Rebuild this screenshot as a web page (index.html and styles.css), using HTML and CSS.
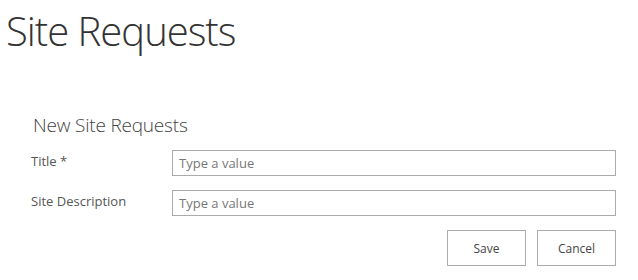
FILE: index.html
```html
<!DOCTYPE html>
<html lang="en">
<head>
  <meta charset="UTF-8" />
  <title>Site Requests</title>
  <link rel="stylesheet" href="styles.css">
</head>
<body>

  <h1 class="page-title">Site Requests</h1>

  <form class="request-form">
    <h2 class="form-title">New Site Requests</h2>

    <div class="form-row">
      <label for="siteTitle">Title *</label>
      <input id="siteTitle" type="text" placeholder="Type a value">
    </div>

    <div class="form-row">
      <label for="siteDescription">Site Description</label>
      <input id="siteDescription" type="text" placeholder="Type a value">
    </div>

    <div class="form-actions">
      <button type="button" class="btn">Save</button>
      <button type="button" class="btn">Cancel</button>
    </div>
  </form>

</body>
</html>
```

FILE: styles.css
```css
body {
  margin: 0;
  font-family: "Open Sans", Arial, sans-serif;
  background: #ffffff;
  color: #444444;
}

.page-title {
  margin: 0;
  padding: 6px 0 0 6px;
  font-size: 40px;
  font-weight: 300;
  line-height: 50px;
  color: #333333;
  letter-spacing: -1px;
}

.request-form {
  padding: 55px 22px 0 31px;
}

.form-title {
  margin: 0 0 11px 2px;
  font-size: 19px;
  font-weight: 300;
  line-height: 28px;
  color: #444444;
  letter-spacing: -0.2px;
}

.form-row {
  display: grid;
  grid-template-columns: 141px 1fr;
  align-items: center;
  margin-bottom: 14px;
}

.form-row label {
  font-size: 13px;
  color: #555555;
  margin-top: -5px;
}

.form-row input {
  height: 26px;
  box-sizing: border-box;
  border: 1px solid #ababab;
  padding: 0 6px;
  font-family: inherit;
  font-size: 13px;
  color: #444444;
  outline: none;
}

.form-row input::placeholder {
  color: #777777;
}

.form-actions {
  display: flex;
  justify-content: flex-end;
  gap: 11px;
}

.btn {
  width: 79px;
  height: 36px;
  border: 1px solid #ababab;
  background: #ffffff;
  font-family: inherit;
  font-size: 12px;
  color: #444444;
  padding: 0;
}
```
